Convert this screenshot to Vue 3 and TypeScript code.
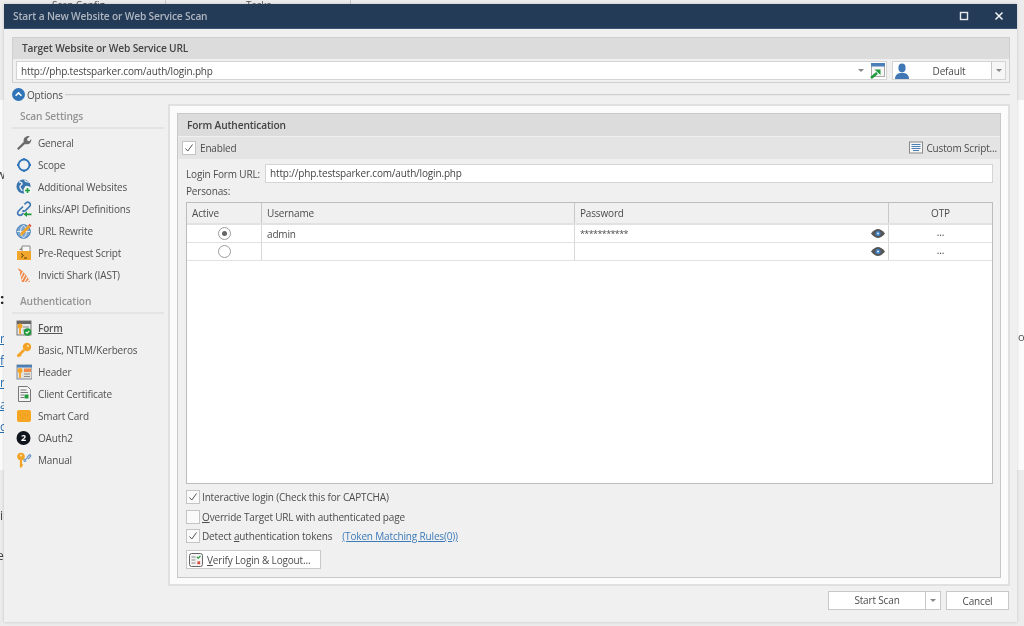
<script setup lang="ts">
const scanItems = [
  { id: 'wrench', label: 'General' },
  { id: 'scope', label: 'Scope' },
  { id: 'globeplus', label: 'Additional Websites' },
  { id: 'link', label: 'Links/API Definitions' },
  { id: 'rewrite', label: 'URL Rewrite' },
  { id: 'script', label: 'Pre-Request Script' },
  { id: 'shark', label: 'Invicti Shark (IAST)' },
]
const authItems = [
  { id: 'form', label: 'Form', active: true },
  { id: 'key', label: 'Basic, NTLM/Kerberos' },
  { id: 'header', label: 'Header' },
  { id: 'cert', label: 'Client Certificate' },
  { id: 'card', label: 'Smart Card' },
  { id: 'oauth', label: 'OAuth2' },
  { id: 'manual', label: 'Manual' },
]
const leftFragments = [
  { t: 'r', y: 331 },
  { t: 'f', y: 353 },
  { t: 'n', y: 375 },
  { t: 'a', y: 397 },
  { t: 'o', y: 419 },
]
</script>

<template>
  <div class="desktop">
    <div class="backdrop">
      <div class="back-top"></div>
      <div class="back-bottom"></div>
      <div class="back-div d1"></div>
      <div class="back-div d2"></div>
      <span class="top-frag tf1">Scan Config</span>
      <span class="top-frag tf2">Tasks</span>
      <span class="plain-frag pf1">w</span>
      <span v-for="f in leftFragments" :key="f.y" class="left-frag" :style="{ top: f.y + 'px' }">{{ f.t }}</span>
      <span class="plain-frag pf2">i</span>
      <span class="plain-frag pf3">e</span>
      <span class="big-frag">:</span>
      <span class="right-frag">ov</span>
    </div>

    <div class="window">
      <header class="titlebar">
        <span class="title">Start a New Website or Web Service Scan</span>
        <div class="winbtns">
          <svg width="10" height="10" viewBox="0 0 10 10"><rect x="1.5" y="1.5" width="7" height="7" fill="none" stroke="#e4e8ec" stroke-width="1.4"/></svg>
          <svg width="10" height="10" viewBox="0 0 10 10"><path d="M1.5 1.5l7 7M8.5 1.5l-7 7" stroke="#f2f4f6" stroke-width="1.5"/></svg>
        </div>
      </header>

      <div class="content">
        <section class="target">
          <div class="target-head">Target Website or Web Service URL</div>
          <div class="target-row">
            <div class="url-box">
              <span class="url-text">http://php.testsparker.com/auth/login.php</span>
              <span class="caret small"></span>
              <svg class="launch" width="15" height="16" viewBox="0 0 15 16">
                <rect x="1.5" y="0.5" width="13" height="13" fill="#f6f6f6" stroke="#a9a9a9"/>
                <rect x="1" y="0" width="14" height="3.5" fill="#4a7fb8"/>
                <path d="M1 15l6-5" stroke="#1f9a3c" stroke-width="2.6"/>
                <path d="M4.5 6.5h6v5.5z" fill="#1f9a3c"/>
              </svg>
            </div>
            <div class="profile">
              <svg class="person" width="16" height="16" viewBox="0 0 16 16">
                <ellipse cx="8" cy="5" rx="3.6" ry="4.4" fill="#3f78b5"/>
                <path d="M1 16c0-4 2.5-5.5 5-6h4c2.500.5 5 2 5 6z" fill="#3f78b5"/>
              </svg>
              <span class="profile-name">Default</span>
              <span class="profile-drop"><span class="caret small"></span></span>
            </div>
          </div>
        </section>

        <div class="options">
          <span class="opt-icon">
            <svg width="13" height="13" viewBox="0 0 13 13"><circle cx="6.500" cy="6.500" r="6.500" fill="#2f74b8"/><path d="M3.600 7.800l2.900-2.900 2.900 2.900" fill="none" stroke="#fff" stroke-width="1.500"/></svg>
          </span>
          <span class="opt-label">Options</span>
          <span class="opt-line"></span>
        </div>

        <div class="main">
          <aside class="sidebar">
            <div class="side-head first">Scan Settings</div>
            <a v-for="it in scanItems" :key="it.id" class="side-item">
              <svg class="side-icon" width="16" height="16" viewBox="0 0 16 16">
                <template v-if="it.id === 'wrench'">
                  <path d="M2.500 15L1 13.500 7.800 6.700C7.200 4.500 8 2 11 1.200c1-.3 2-.2 2.700.1L11 4l.6 1.700 1.700.6L15.200 4c.4 2.500-1 5-3.800 5.300-1 .1-1.700 0-2.400-.3z" fill="#6b6b6b"/>
                </template>
                <template v-else-if="it.id === 'scope'">
                  <circle cx="8" cy="8" r="5.500" fill="none" stroke="#2f74b8" stroke-width="1.900"/>
                  <path d="M8 1v2M8 13v2M1 8h2M13 8h2" stroke="#2f74b8" stroke-width="1.800"/>
                </template>
                <template v-else-if="it.id === 'globeplus'">
                  <circle cx="7.500" cy="7.500" r="7" fill="#3a74ac"/>
                  <path d="M3 3c2 0 3 1 3 2S4 6 4 8s2 2 2 4M9 1c0 2 2 2 4 2M9 8c2-1 4 0 5 1" fill="none" stroke="#dbe7f2" stroke-width="1.500"/>
                  <circle cx="11.500" cy="11.500" r="4" fill="#f2f8f2"/>
                  <path d="M11.500 9v5M9 11.500h5" stroke="#1f9a3c" stroke-width="1.600"/>
                </template>
                <template v-else-if="it.id === 'link'">
                  <path d="M7 5.500l-4.500 4.500c-1.200 1.200-1.200 2.800 0 3.700s2.400.8 3.500-.2L7.500 12M6.500 9.500c1 .8 2.200.8 3.200-.2l3.800-3.800c1.100-1.100 1.100-2.600 0-3.600s-2.500-1-3.600.1L8.500 3.400" fill="none" stroke="#3f78b5" stroke-width="1.700"/>
                  <path d="M15.500 12.500H11V10.500l-3.500 2.700L11 16v-1.800h4.500z" fill="#1f9a3c"/>
                </template>
                <template v-else-if="it.id === 'rewrite'">
                  <circle cx="7.500" cy="8.500" r="6.800" fill="#7aa5d0" stroke="#3f78b5"/>
                  <path d="M1 8.500h13M7.500 2c-4 4-4 9 0 13M7.500 2c4 4 4 9 0 13" fill="none" stroke="#eaf1f8" stroke-width=".9"/>
                  <path d="M4 13l1-3.500L12.500 2l2 2L7 11.500z" fill="#f3a428"/>
                  <path d="M12.500 2l2 2 1-1.200-2-2z" fill="#d9452f"/>
                </template>
                <template v-else-if="it.id === 'script'">
                  <path d="M6 1h8v10H6z" fill="#f7f7f7" stroke="#8a8a8a"/>
                  <path d="M3 5l3-3v3z" fill="#8a8a8a"/>
                  <rect x="1" y="6" width="14" height="9" fill="#f2a62c"/>
                  <path d="M5 8.500l2.500 2L5 12.500M8 13h3" fill="none" stroke="#5a3a08" stroke-width="1"/>
                </template>
                <template v-else>
                  <path d="M2 1c4 2 9 7 12 14H6C5 11 4 6 2 1z" fill="#ef8a4a"/>
                  <path d="M4 4l-1 3 M7 5L4.500 10M9 7.500L6 13M11 10l-2.500 5M13 13l-2 2" stroke="#f2f2f2" stroke-width="1.100"/>
                </template>
              </svg>
              <span>{{ it.label }}</span>
            </a>
            <div class="side-head second">Authentication</div>
            <a v-for="it in authItems" :key="it.id" class="side-item" :class="{ active: it.active }">
              <svg class="side-icon" width="16" height="16" viewBox="0 0 16 16">
                <template v-if="it.id === 'form'">
                  <rect x="1" y="1" width="14" height="14" fill="#e8e8e8" stroke="#777"/>
                  <rect x="1" y="1" width="14" height="3" fill="#666"/>
                  <path d="M7 7h6M7 10h3" stroke="#8a8a8a"/>
                  <circle cx="4" cy="6" r="2.500" fill="#f3a428"/>
                  <path d="M4 7v7" stroke="#f3a428" stroke-width="1.800"/>
                  <circle cx="11.500" cy="12" r="3.800" fill="#1f9a3c"/>
                  <path d="M9.700 12l1.300 1.300 2.300-2.500" fill="none" stroke="#fff" stroke-width="1.100"/>
                </template>
                <template v-else-if="it.id === 'key'">
                  <circle cx="11" cy="5" r="4.200" fill="#f3a428"/>
                  <circle cx="12" cy="4" r="1" fill="#fbe6b8"/>
                  <path d="M8 8l-6.500 6.500" stroke="#f3a428" stroke-width="2.600"/>
                  <path d="M3.500 12.500l1.500 1.500" stroke="#f3a428" stroke-width="2"/>
                </template>
                <template v-else-if="it.id === 'header'">
                  <rect x="1" y="1" width="15" height="14" fill="#e6e2da" stroke="#7b8a9c"/>
                  <rect x="1" y="1" width="15" height="2.500" fill="#4a7fb8"/>
                  <rect x="8" y="4.500" width="7" height="3.500" fill="#ef8a4a"/>
                  <path d="M8 10h6M8 12.500h6" stroke="#888"/>
                  <circle cx="4" cy="6.500" r="2.500" fill="#f3a428"/>
                  <path d="M4 8v6" stroke="#f3a428" stroke-width="1.800"/>
                </template>
                <template v-else-if="it.id === 'cert'">
                  <path d="M2.500.5h9l3 3v12h-12z" fill="#f4f4f4" stroke="#777"/>
                  <path d="M4.500 4h6M4.500 6.500h7.500M4.500 9H8M4.500 11.500H8" stroke="#777"/>
                  <rect x="8.500" y="8.500" width="4" height="4" fill="#1f9a3c"/>
                </template>
                <template v-else-if="it.id === 'card'">
                  <rect x="1" y="2" width="14" height="12" rx="2" fill="#f5a623"/>
                  <path d="M4 7h.6M8 7h.6M11 7h.6M6 10h.6" stroke="#d98a10"/>
                </template>
                <template v-else-if="it.id === 'oauth'">
                  <circle cx="7.500" cy="8" r="7" fill="#10141c"/>
                  <text x="7.500" y="11" text-anchor="middle" class="oauth-num">2</text>
                </template>
                <template v-else>
                  <circle cx="5" cy="4.500" r="3.800" fill="#f3a428"/>
                  <circle cx="5" cy="3.500" r="1" fill="#fbe6b8"/>
                  <path d="M5 7v8.500" stroke="#f3a428" stroke-width="2.200"/>
                  <path d="M5 13h2" stroke="#f3a428" stroke-width="1.600"/>
                  <path d="M9 8l2.500-2.500M12 7l2.500-2.500c.6-.6 0-1.800-.8-1.800l-2.500 2.300M8.500 7c-.8.800-.8 2 0 2.300.6.300 1.200 0 1.800-.5" fill="none" stroke="#6d9ccb" stroke-width="1.200"/>
                </template>
              </svg>
              <span>{{ it.label }}</span>
            </a>
          </aside>

          <section class="panel">
            <div class="inner">
              <div class="inner-head">Form Authentication</div>
              <div class="enabled-row">
                <span class="check white"><svg width="10" height="10" viewBox="0 0 10 10"><path d="M1.500 5.500l2.300 2.500L8.500 1.500" fill="none" stroke="#555" stroke-width="1"/></svg></span>
                <span class="enabled-label">Enabled</span>
                <span class="custom">
                  <svg width="14" height="14" viewBox="0 0 14 14">
                    <rect x=".5" y="1" width="13" height="11" fill="#f6f6f6" stroke="#8a8a8a"/>
                    <path d="M2.500 3.500h9M2.500 5.500h9M2.500 7.500h9M4 9.500h6" stroke="#4a7fb8"/>
                  </svg>
                  Custom Script...
                </span>
              </div>
              <div class="form-body">
                <div class="login-row">
                  <label>Login Form URL:</label>
                  <div class="login-input">http://php.testsparker.com/auth/login.php</div>
                </div>
                <div class="personas">Personas:</div>
                <div class="table">
                  <div class="t-row t-head">
                    <div class="c c-active">Active</div>
                    <div class="c c-user">Username</div>
                    <div class="c c-pass">Password</div>
                    <div class="c c-otp center">OTP</div>
                  </div>
                  <div class="t-row">
                    <div class="c c-active center"><span class="radio on"></span></div>
                    <div class="c c-user">admin</div>
                    <div class="c c-pass pass"><span class="stars">***********</span><svg class="eye" width="14" height="9" viewBox="0 0 14 9"><path d="M0 4.500C3 1 5 0 7 0s4 1 7 4.500C11 8 9 9 7 9S3 8 0 4.500z" fill="#555"/><circle cx="7" cy="4.500" r="2.600" fill="#3f82c4"/><circle cx="7" cy="4.500" r="1" fill="#dbe9f6"/></svg></div>
                    <div class="c c-otp center dots">...</div>
                  </div>
                  <div class="t-row">
                    <div class="c c-active center"><span class="radio"></span></div>
                    <div class="c c-user"></div>
                    <div class="c c-pass pass"><span class="stars"></span><svg class="eye" width="14" height="9" viewBox="0 0 14 9"><path d="M0 4.500C3 1 5 0 7 0s4 1 7 4.500C11 8 9 9 7 9S3 8 0 4.500z" fill="#555"/><circle cx="7" cy="4.500" r="2.600" fill="#3f82c4"/><circle cx="7" cy="4.500" r="1" fill="#dbe9f6"/></svg></div>
                    <div class="c c-otp center dots">...</div>
                  </div>
                </div>
                <div class="opts">
                  <div class="opt-row">
                    <span class="check"><svg width="10" height="10" viewBox="0 0 10 10"><path d="M1.500 5.500l2.300 2.500L8.500 1.500" fill="none" stroke="#555" stroke-width="1"/></svg></span>
                    <span>Interactive login (Check this for CAPTCHA)</span>
                  </div>
                  <div class="opt-row">
                    <span class="check"></span>
                    <span><u>O</u>verride Target URL with authenticated page</span>
                  </div>
                  <div class="opt-row">
                    <span class="check"><svg width="10" height="10" viewBox="0 0 10 10"><path d="M1.500 5.500l2.300 2.500L8.500 1.500" fill="none" stroke="#555" stroke-width="1"/></svg></span>
                    <span>Detect <u>a</u>uthentication tokens</span>
                    <a class="link">(Token Matching Rules(0))</a>
                  </div>
                </div>
                <button class="verify" type="button">
                  <svg width="14" height="14" viewBox="0 0 14 14">
                    <rect x=".5" y=".5" width="13" height="13" rx="2" fill="#f4f4f4" stroke="#666"/>
                    <path d="M2.500 4h4M2.500 7h4M2.500 10h4" stroke="#888"/>
                    <path d="M8 4l1.200 1.200L11.500 2.800" fill="none" stroke="#1f9a3c" stroke-width="1.200"/>
                    <path d="M8.500 8.500l2.500 2.500M11 8.500L8.500 11" stroke="#d9452f" stroke-width="1.300"/>
                  </svg>
                  <span><u>V</u>erify Login &amp; Logout...</span>
                </button>
              </div>
            </div>
          </section>
        </div>

        <footer class="footer">
          <div class="split">
            <span class="split-main">Start Scan</span>
            <span class="split-drop"><span class="caret small"></span></span>
          </div>
          <button class="cancel" type="button">Cancel</button>
        </footer>
      </div>
    </div>
  </div>
</template>

<style>
html, body { margin: 0; padding: 0; background: #fff; }
</style>

<style scoped>
.desktop {
  position: relative;
  width: 1024px;
  height: 626px;
  overflow: hidden;
  background: #fbfbfb;
  font-family: "Open Sans", "Liberation Sans", sans-serif;
  font-size: 10px;
  letter-spacing: -0.16px;
  color: #4c4c4c;
  filter: blur(0.35px);
}
.backdrop { position: absolute; inset: 0; }
.back-top { position: absolute; left: 0; right: 0; top: 0; height: 100px; background: #ececec; }
.back-bottom { position: absolute; left: 0; right: 0; top: 470px; bottom: 0; background: #ececec; }
.back-div { position: absolute; top: 0; height: 4px; width: 1px; background: #c8c8c8; }
.d1 { left: 165px; }
.d2 { left: 350px; }
.top-frag { position: absolute; top: -2px; color: #555; font-size: 10px; }
.tf1 { left: 52px; }
.tf2 { left: 246px; }
.plain-frag { position: absolute; left: 0; font-size: 12px; line-height: 16px; color: #444; }
.pf1 { left: -4px; top: 167px; }
.pf2 { top: 508px; }
.pf3 { top: 548px; left: -3px; }
.left-frag { position: absolute; left: 0; font-size: 12px; text-decoration: underline; line-height: 16px; color: #2a6fb0; }
.big-frag { position: absolute; left: 0; top: 288px; font-size: 15px; font-weight: 700; color: #222; }
.right-frag { position: absolute; left: 1018px; top: 329px; font-size: 11px; color: #555; }

.window {
  position: absolute;
  left: 4px;
  top: 4px;
  width: 1013px;
  height: 618px;
  background: #f0f0f0;
  box-shadow: 0 0 3px rgba(0, 0, 0, .18);
  display: flex;
  flex-direction: column;
}
.titlebar {
  height: 25px;
  flex: none;
  background: #243b58;
  border-bottom: 1px solid #3d5676;
  box-sizing: border-box;
  display: flex;
  align-items: center;
  justify-content: space-between;
  padding: 0 13px 0 9px;
}
.title { color: #aeb5bf; font-weight: 600; font-size: 10.200px; }
.winbtns { display: flex; gap: 25px; align-items: center; }

.content { flex: 1; padding: 8px 7px 0 8px; display: flex; flex-direction: column; min-height: 0; }

.target { border: 1px solid #cfcfcf; height: 46px; box-sizing: border-box; flex: none; }
.target-head { height: 21px; background: #dcdcdc; display: flex; align-items: center; padding: 0 0 1px 9px; box-sizing: border-box; font-weight: 600; font-size: 10.200px; color: #444; }
.target-row { height: 23px; display: flex; padding: 2px 3px 0 3px; box-sizing: border-box; gap: 5px; }
.url-box { flex: 1; height: 19px; background: #fff; border: 1px solid #d4d4d4; box-sizing: border-box; display: flex; align-items: center; padding-left: 4px; }
.url-text { flex: 1; color: #444; }
.caret { display: inline-block; width: 0; height: 0; border-left: 3px solid transparent; border-right: 3px solid transparent; border-top: 3px solid #888; }
.launch { margin: 0 1px 0 6px; }
.profile { width: 114px; height: 19px; border: 1px solid #d4d4d4; box-sizing: border-box; background: #fff; display: flex; align-items: center; }
.person { margin-left: 1px; flex: none; }
.profile-name { flex: 1; text-align: center; padding-right: 3px; }
.profile-drop { width: 14px; height: 100%; border-left: 1px solid #c8c8c8; display: flex; align-items: center; justify-content: center; background: #f6f6f6; box-sizing: border-box; }

.options { height: 15px; margin-top: 4px; display: flex; align-items: center; flex: none; }
.opt-icon { width: 13px; height: 13px; display: flex; }
.opt-label { margin-left: 2px; }
.opt-line { flex: 1; border-top: 1px solid #cfcfcf; border-bottom: 1px solid #e8e8e8; margin-left: 2px; }

.main { flex: none; display: flex; height: 482px; margin-top: 2px; }
.sidebar { width: 156px; flex: none; }
.side-head { margin-right: 4px; padding-left: 8px; color: #949494; font-weight: 600; font-size: 10.200px; height: 22px; line-height: 19px; border-bottom: 2px solid #e4e4e4; box-sizing: border-box; margin-bottom: 3px; }
.side-head.first { margin-top: 3px; }
.side-head.second { margin-top: 6px; }
.side-item { display: flex; align-items: center; height: 22px; padding-left: 4px; gap: 6px; color: #505050; }
.side-item.active { text-decoration: underline; font-weight: 600; color: #555; }
.side-icon { flex: none; }
.oauth-num { font: 700 9px "Open Sans", sans-serif; fill: #fff; }

.panel { flex: 1; border: 2px solid #e0e0e0; box-sizing: border-box; padding: 7px 7px 6px 7px; background: #fbfbfb; }
.inner { height: 100%; border: 1px solid #c8c8c8; box-sizing: border-box; background: #f0f0f0; display: flex; flex-direction: column; }
.inner-head { height: 22px; background: #dcdcdc; flex: none; display: flex; align-items: center; padding-left: 9px; font-weight: 600; font-size: 10.200px; color: #444; }
.enabled-row { height: 23px; background: #e4e4e4; border-top: 1px solid #f0f0f0; box-sizing: border-box; flex: none; display: flex; align-items: center; padding: 0 3px 0 4px; }
.enabled-label { margin-left: 4px; flex: 1; }
.custom { display: flex; align-items: center; gap: 3px; }

.check { width: 14px; height: 14px; border: 1px solid #c4c4c4; box-sizing: border-box; display: inline-flex; align-items: center; justify-content: center; background: #fafafa; flex: none; }
.check.white { background: #fff; }

.form-body { flex: 1; padding: 5px 7px 0 8px; display: flex; flex-direction: column; min-height: 0; }
.login-row { display: flex; align-items: center; height: 19px; flex: none; }
.login-row label { width: 79px; flex: none; }
.login-input { flex: 1; height: 19px; background: #fff; border: 1px solid #d4d4d4; box-sizing: border-box; padding-left: 4px; line-height: 17px; color: #444; }
.personas { height: 19px; line-height: 17px; flex: none; }
.table { height: 282px; flex: none; border: 1px solid #bdbdbd; box-sizing: border-box; background: #fff; }
.t-row { display: flex; height: 18px; border-bottom: 1px solid #e2e2e2; box-sizing: border-box; }
.t-head { height: 22px; background: #f0f0f0; border-bottom: 2px solid #e2e2e2; }
.c { display: flex; align-items: center; padding-left: 5px; box-sizing: border-box; border-right: 1px solid #d8d8d8; }
.t-head .c { border-right-color: #c8c8c8; }
.c-active { width: 75px; }
.c-user { width: 313px; }
.c-pass { width: 314px; }
.c-otp { flex: 1; border-right: 0; }
.center { justify-content: center; padding-left: 0; }
.pass { justify-content: space-between; padding-right: 3px; }
.stars { font-size: 9px; letter-spacing: -.6px; }
.dots { padding-bottom: 3px; }
.radio { width: 13px; height: 13px; border-radius: 50%; border: 1px solid #9c9c9c; box-sizing: border-box; background: #fff; display: inline-flex; align-items: center; justify-content: center; }
.radio.on::after { content: ""; width: 5px; height: 5px; border-radius: 50%; background: #666; }

.opts { margin-top: 6px; flex: none; display: flex; flex-direction: column; gap: 5.500px; }
.opt-row { display: flex; align-items: center; height: 14px; gap: 2px; }
.link { color: #3c7ab8; text-decoration: underline; margin-left: 8px; }
.verify { margin-top: 7px; width: 135px; height: 19px; border: 1px solid #c8c8c8; background: #fff; padding: 0 0 0 2px; display: flex; align-items: center; gap: 4px; font: inherit; letter-spacing: inherit; color: #4c4c4c; box-sizing: border-box; flex: none; }

.footer { display: flex; justify-content: flex-end; gap: 5px; margin-top: 5px; padding-right: 1px; flex: none; }
.split { width: 113px; height: 19px; border: 1px solid #c8c8c8; box-sizing: border-box; background: #fff; display: flex; }
.split-main { flex: 1; text-align: center; line-height: 17px; }
.split-drop { width: 15px; border-left: 1px solid #c8c8c8; display: flex; align-items: center; justify-content: center; box-sizing: border-box; }
.cancel { width: 63px; height: 19px; border: 1px solid #c8c8c8; background: #fff; font: inherit; letter-spacing: inherit; color: #4c4c4c; padding: 0; box-sizing: border-box; }
</style>
